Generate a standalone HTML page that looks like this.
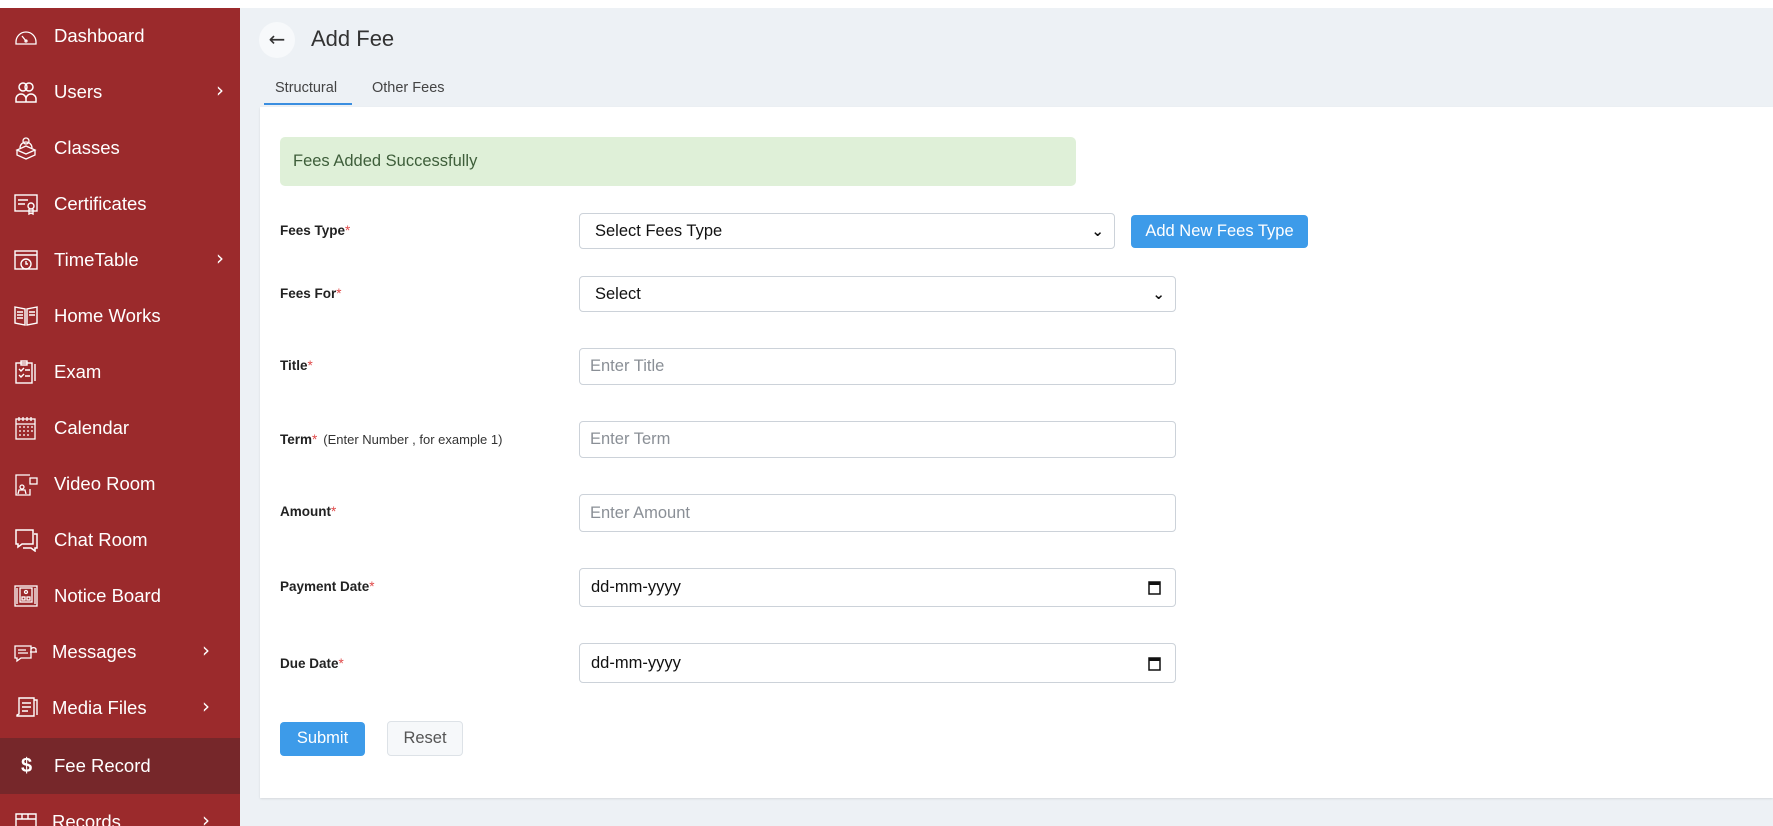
<!DOCTYPE html>
<html style="overflow:hidden;height:826px"><head><meta charset="utf-8"><style>
*{box-sizing:border-box;margin:0;padding:0}
body{width:1773px;height:826px;overflow:hidden;background:#edf1f5;font-family:"Liberation Sans",sans-serif;position:relative}
.top{position:absolute;left:0;top:0;width:1773px;height:8px;background:#fff}
.side{position:absolute;left:0;top:8px;width:240px;height:818px;background:#9b2a2c;overflow:hidden}
.item{position:absolute;left:0;width:240px;height:56px;color:#fff;font-size:18.5px}
.item svg{position:absolute;left:14px;top:16px;width:24px;height:24px}
.item span{position:absolute;left:54px;top:17px}
.item b{position:absolute;left:216px;top:14px;font-weight:normal;font-size:20px;font-family:"DejaVu Sans",sans-serif}
.act{background:#76272a}
.back{position:absolute;left:259px;top:22px;width:36px;height:36px;border-radius:50%;background:#f7f9fb;color:#333;font-size:20px;text-align:center;line-height:35px;font-family:"DejaVu Sans",sans-serif}
.title{position:absolute;left:311px;top:26px;font-size:22px;color:#333}
.tab{position:absolute;top:80px;font-size:14.5px;color:#444}
.ul{position:absolute;left:264px;top:103px;width:88px;height:2px;background:#3a8ee0}
.card{position:absolute;left:260px;top:107px;width:1513px;height:691px;background:#fff;box-shadow:0 1px 2px rgba(0,0,0,.1)}
.alert{position:absolute;left:280px;top:137px;width:796px;height:49px;background:#dff0d8;border-radius:5px;color:#3e5e3a;font-size:16.5px;padding:15px 0 0 13px}
.lbl{position:absolute;left:280px;font-size:13.5px;font-weight:bold;color:#222}
.lbl i{color:#e04a4a;font-style:normal;font-weight:normal}
.lbl em{font-style:normal;font-weight:normal;color:#333;font-size:13px;margin-left:6px}
.f{position:absolute;left:579px;width:597px;border:1px solid #ccd2d9;border-radius:4px;background:#fff;font-size:16.5px;padding-left:15px;color:#111}
.ph{color:#8a8f96;padding-left:10px}
.chev{position:absolute;right:10px;top:0;font-size:15px;font-family:"DejaVu Sans",sans-serif;font-weight:bold}
.btn{position:absolute;border-radius:4px;font-size:16.5px;text-align:center}
</style></head><body>
<div class="top"></div>
<div class="side">
<div class="item" style="top:0"><svg viewBox="0 0 24 24" fill="none" stroke="#fff" stroke-width="1.3"><path d="M2 18a10 10 0 0 1 20 0v2H2z"/><path d="M12 17l-4-5"/><circle cx="12" cy="17" r="1"/></svg><span>Dashboard</span></div>
<div class="item" style="top:56px"><svg viewBox="0 0 24 24" fill="none" stroke="#fff" stroke-width="1.5"><circle cx="9" cy="7" r="4"/><circle cx="15" cy="7" r="4"/><path d="M2 22v-3a5 5 0 0 1 10 0v3zM12 22v-3a5 5 0 0 1 10 0v3z"/></svg><span>Users</span><b>›</b></div>
<div class="item" style="top:112px"><svg viewBox="0 0 24 24" fill="none" stroke="#fff" stroke-width="1.3"><circle cx="12" cy="5" r="3"/><path d="M6 12a6 6 0 0 1 12 0M3 14l9 4 9-4-9-4zM3 14v5l9 4 9-4v-5"/></svg><span>Classes</span></div>
<div class="item" style="top:168px"><svg viewBox="0 0 24 24" fill="none" stroke="#fff" stroke-width="1.4"><rect x="1" y="3" width="22" height="16"/><path d="M4 8h10M4 12h7"/><circle cx="17" cy="14" r="3"/><path d="M15 17v5l2-1 2 1v-5"/></svg><span>Certificates</span></div>
<div class="item" style="top:224px"><svg viewBox="0 0 24 24" fill="none" stroke="#fff" stroke-width="1.4"><rect x="1" y="3" width="22" height="18"/><path d="M1 7h22"/><circle cx="12" cy="16" r="5"/><path d="M12 13v3h2"/></svg><span>TimeTable</span><b>›</b></div>
<div class="item" style="top:280px"><svg viewBox="0 0 24 24" fill="none" stroke="#fff" stroke-width="1.4"><path d="M1 3l10 2v16L1 19zM23 3l-10 2v16l10-2zM3 8h6M3 11h6M3 14h6M15 8h6M15 11h6"/></svg><span>Home Works</span></div>
<div class="item" style="top:336px"><svg viewBox="0 0 24 24" fill="none" stroke="#fff" stroke-width="1.4"><rect x="2" y="3" width="16" height="20"/><rect x="7" y="1" width="6" height="4"/><path d="M5 9l2 2 3-3M11 10h5M5 15l2 2 3-3M11 16h5M21 4v17"/></svg><span>Exam</span></div>
<div class="item" style="top:392px"><svg viewBox="0 0 24 24" fill="none" stroke="#fff" stroke-width="1.3"><rect x="2" y="3" width="19" height="20"/><path d="M2 8h19M5 11h2M9 11h2M13 11h2M17 11h2M5 15h2M9 15h2M13 15h2M17 15h2M5 19h2M9 19h2M13 19h2M5 1v4M9 1v4M13 1v4M17 1v4"/></svg><span>Calendar</span></div>
<div class="item" style="top:448px"><svg viewBox="0 0 24 24" fill="none" stroke="#fff" stroke-width="1.3"><path d="M16 3H2v20h14v-6"/><rect x="16" y="6" width="7" height="6"/><circle cx="8" cy="15" r="2"/><path d="M4 22l1-4h6l1 4"/></svg><span>Video Room</span></div>
<div class="item" style="top:504px"><svg viewBox="0 0 24 24" fill="none" stroke="#fff" stroke-width="1.5"><path d="M2 2h17v14H8l-4 3v-3H2zM20 6h3v14h-2v3l-4-3H9"/></svg><span>Chat Room</span></div>
<div class="item" style="top:560px"><svg viewBox="0 0 24 24" fill="none" stroke="#fff" stroke-width="1.3"><rect x="1" y="2" width="22" height="20"/><rect x="6" y="4" width="12" height="14"/><path d="M3 4v16M21 4v16"/><rect x="8" y="13" width="3" height="3"/><rect x="13" y="13" width="3" height="3"/><circle cx="12" cy="8" r="1.5"/></svg><span>Notice Board</span></div>
<div class="item" style="top:616px"><svg viewBox="0 0 24 24" fill="none" stroke="#fff" stroke-width="1.3"><path d="M1 6h16v12H7l-4 3v-3H1zM4 10h8M4 13h10"/><path d="M17 9a3 3 0 0 1 5 0v3h1h-7"/></svg><span style="left:52px">Messages</span><b style="left:202px">›</b></div>
<div class="item" style="top:672px"><svg viewBox="0 0 24 24" fill="none" stroke="#fff" stroke-width="1.4"><path d="M5 2h15v18H3v-1l2-1zM20 4h3v15M8 7h9M8 11h9M8 15h6"/></svg><span style="left:52px">Media Files</span><b style="left:202px">›</b></div>
<div class="item act" style="top:730px"><span style="left:21px;font-size:20px;font-weight:bold">$</span><span>Fee Record</span></div>
<div class="item" style="top:786px"><svg viewBox="0 0 24 24" fill="none" stroke="#fff" stroke-width="1.4"><path d="M2 4h20v18H2zM2 9h20M8 4v5M14 4v5"/></svg><span style="left:52px">Records</span><b style="left:202px">›</b></div>
</div>
<div class="back">←</div>
<div class="title">Add Fee</div>
<div class="tab" style="left:275px">Structural</div>
<div class="tab" style="left:372px">Other Fees</div>
<div class="ul"></div>
<div class="card"></div>
<div class="alert">Fees Added Successfully</div>

<div class="lbl" style="top:223px">Fees Type<i>*</i></div>
<div class="f" style="top:213px;height:36px;width:536px;line-height:34px">Select Fees Type<span class="chev">⌄</span></div>
<div class="btn" style="left:1131px;top:215px;width:177px;height:33px;background:#3d9be9;color:#fff;line-height:32px">Add New Fees Type</div>

<div class="lbl" style="top:286px">Fees For<i>*</i></div>
<div class="f" style="top:276px;height:36px;line-height:34px">Select<span class="chev">⌄</span></div>

<div class="lbl" style="top:358px">Title<i>*</i></div>
<div class="f ph" style="top:348px;height:37px;line-height:35px">Enter Title</div>

<div class="lbl" style="top:432px">Term<i>*</i><em>(Enter Number , for example 1)</em></div>
<div class="f ph" style="top:421px;height:37px;line-height:35px">Enter Term</div>

<div class="lbl" style="top:504px">Amount<i>*</i></div>
<div class="f ph" style="top:494px;height:38px;line-height:36px">Enter Amount</div>

<div class="lbl" style="top:579px">Payment Date<i>*</i></div>
<div class="f" style="top:568px;height:39px;line-height:37px;padding-left:11px">dd-mm-yyyy<svg style="position:absolute;right:14px;top:11px" width="13" height="15" viewBox="0 0 13 15"><rect x="1" y="2" width="11" height="12" fill="none" stroke="#111" stroke-width="1.5"/><rect x="1" y="2" width="11" height="3" fill="#111"/></svg></div>

<div class="lbl" style="top:656px">Due Date<i>*</i></div>
<div class="f" style="top:643px;height:40px;line-height:38px;padding-left:11px">dd-mm-yyyy<svg style="position:absolute;right:14px;top:12px" width="13" height="15" viewBox="0 0 13 15"><rect x="1" y="2" width="11" height="12" fill="none" stroke="#111" stroke-width="1.5"/><rect x="1" y="2" width="11" height="3" fill="#111"/></svg></div>

<div class="btn" style="left:280px;top:722px;width:85px;height:34px;background:#3d9be9;color:#fff;line-height:33px">Submit</div>
<div class="btn" style="left:387px;top:721px;width:76px;height:35px;background:#f6f8fa;border:1px solid #dde2e7;color:#555;line-height:33px">Reset</div>
</body></html>
